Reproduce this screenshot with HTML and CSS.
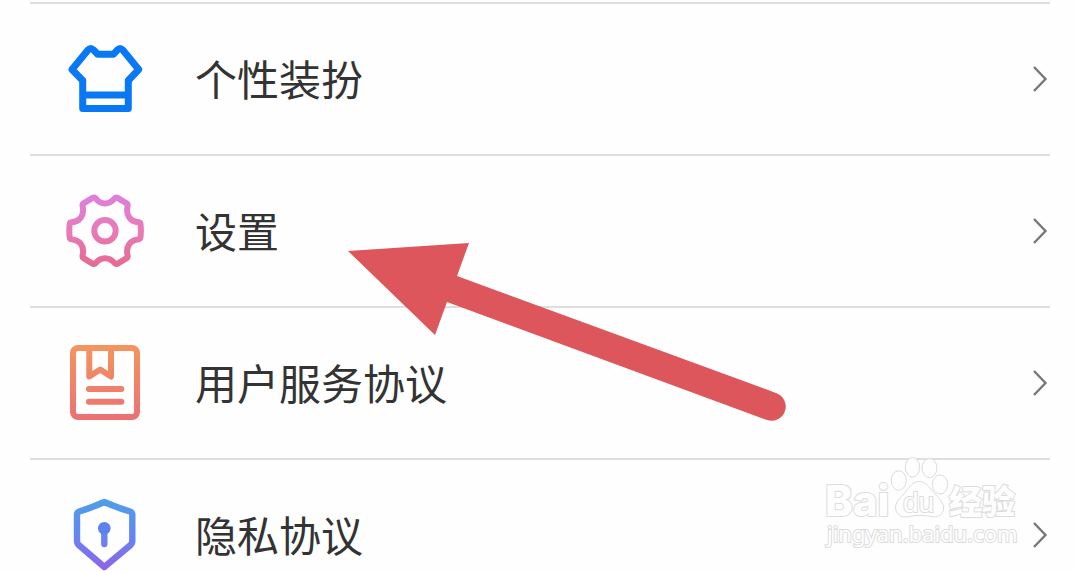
FILE: index.html
```html
<!DOCTYPE html>
<html lang="zh-CN">
<head>
<meta charset="utf-8">
<meta name="viewport" content="width=device-width, initial-scale=1">
<title>设置</title>
<link rel="stylesheet" href="styles.css">
</head>
<body>
<main class="page">
  <ul class="menu">
    <li class="menu-item">
      <a class="menu-link" href="#dress">
        <svg class="icon" viewBox="0 0 80 80" aria-hidden="true">
          <path d="M7 30.500 23.200 10.800Q25.700 8 28.300 10.800L32.700 15.300H48.300L52.500 10.800Q55 8 57.600 10.800L73.700 30.500 63.300 41.500V69.500H17.700V41.500ZM17.700 56H63.300" fill="none" stroke="#0878f4" stroke-width="7" stroke-linejoin="round"/>
        </svg>
        <span class="label">个性装扮</span>
        <svg class="chevron" viewBox="0 0 16 28" aria-hidden="true"><path d="M2 2 13.500 14 2 26"/></svg>
      </a>
    </li>
    <li class="menu-item">
      <a class="menu-link" href="#settings">
        <svg class="icon" viewBox="0 0 80 80" aria-hidden="true">
          <defs><linearGradient id="pink" gradientUnits="userSpaceOnUse" x1="40" y1="3" x2="40" y2="76"><stop offset="0" stop-color="#dc7fdd"/><stop offset=".5" stop-color="#e87bb8"/><stop offset="1" stop-color="#e56a90"/></linearGradient></defs>
          <g fill="none" stroke="url(#pink)" stroke-width="6" stroke-linejoin="round">
            <path d="M18.500 12.300 28 6.700Q29.500 6 30.800 7.500C35.500 14 44.500 14 49.500 7.500Q50.700 6 52.200 6.700L61.700 12.300Q63 13.200 62.600 15C60.500 24 65 30.500 73.800 31.300Q75.300 31.500 75.500 33Q76.300 39.700 75.500 46.500Q75.300 48 73.800 48.200C65 49 60.500 55.500 62.600 64.500Q63 66.300 61.700 67.200L52.200 72.800Q50.700 73.500 49.500 72C44.500 65.500 35.500 65.500 30.800 72Q29.500 73.500 28 72.800L18.500 67.200Q17.200 66.300 17.600 64.500C19.700 55.500 15.200 49 6.400 48.200Q4.900 48 4.700 46.500Q3.900 39.700 4.700 33Q4.900 31.500 6.400 31.300C15.200 30.500 19.700 24 17.600 15Q17.200 13.200 18.500 12.300Z"/>
            <circle cx="40" cy="39.700" r="10.700"/>
          </g>
        </svg>
        <span class="label">设置</span>
        <svg class="chevron" viewBox="0 0 16 28" aria-hidden="true"><path d="M2 2 13.500 14 2 26"/></svg>
      </a>
    </li>
    <li class="menu-item">
      <a class="menu-link" href="#terms">
        <svg class="icon" viewBox="0 0 80 80" aria-hidden="true">
          <defs><linearGradient id="orange" gradientUnits="userSpaceOnUse" x1="40" y1="2" x2="40" y2="77"><stop offset="0" stop-color="#f4955d"/><stop offset="1" stop-color="#ec7173"/></linearGradient></defs>
          <g fill="none" stroke="url(#orange)" stroke-width="6" stroke-linejoin="round" stroke-linecap="round">
            <rect x="8" y="5" width="64" height="69" rx="5"/>
            <path d="M24.300 5V33.500L35.200 26.500 46 33.500V5"/>
            <path d="M24 46H56.300M24 58.700H56.300"/>
          </g>
        </svg>
        <span class="label">用户服务协议</span>
        <svg class="chevron" viewBox="0 0 16 28" aria-hidden="true"><path d="M2 2 13.500 14 2 26"/></svg>
      </a>
    </li>
    <li class="menu-item">
      <a class="menu-link" href="#privacy">
        <svg class="icon" viewBox="0 0 80 80" aria-hidden="true">
          <defs><linearGradient id="blue" gradientUnits="userSpaceOnUse" x1="40" y1="4" x2="40" y2="76"><stop offset="0" stop-color="#4d9fe8"/><stop offset=".5" stop-color="#6685f3"/><stop offset="1" stop-color="#9162e6"/></linearGradient></defs>
          <g fill="none" stroke="url(#blue)" stroke-width="6.400" stroke-linejoin="round" stroke-linecap="round">
            <path d="M39.300 7Q53 13 65 16.500Q67.300 17.300 67.300 19.500V46Q67.300 48.500 65 50.500L39.300 72 14.300 50.500Q12 48.500 12 46V19.500Q12 17.300 14.300 16.500Q26 13 39.300 7Z"/>
            <path d="M39.300 33V49"/>
          </g>
          <circle cx="39.300" cy="33.300" r="6.300" fill="#5c83ed"/>
        </svg>
        <span class="label">隐私协议</span>
        <svg class="chevron" viewBox="0 0 16 28" aria-hidden="true"><path d="M2 2 13.500 14 2 26"/></svg>
      </a>
    </li>
  </ul>

  <svg class="pointer" viewBox="0 0 480 220" aria-hidden="true">
    <path d="M18 31 139 23 127 56 446 173A13.800 13.800 0 0 1 437 200L117 82 105 115Z" fill="#dc565b"/>
  </svg>

  <svg class="watermark" viewBox="0 0 266 127" role="img" aria-label="Baidu 经验 jingyan.baidu.com">
    <g class="mark">
      <text class="mark-brand" x="15" y="71">Bai</text>
      <path d="M109 36.500C117 36.500 119 43 126 50C132 56 134 60 133.500 64C133 70 127 73 121 71.500C113 70 106 70 99 71.500C91 73.500 86 69 85.500 63C85.500 58 88 55 93 50C99 43 102 36.500 109 36.500Z"/>
      <ellipse cx="88.700" cy="35.500" rx="7.500" ry="9.700"/>
      <ellipse cx="102.500" cy="22.300" rx="7.200" ry="9.800"/>
      <ellipse cx="119.500" cy="23" rx="7.500" ry="9.500"/>
      <ellipse cx="130" cy="39.500" rx="7.700" ry="9.500"/>
      <text class="mark-du" x="93" y="67">du</text>
      <text class="mark-cjk" x="139" y="69">经验</text>
      <text class="mark-url" x="17" y="97">jingyan.baidu.com</text>
    </g>
  </svg>
</main>
</body>
</html>
```
FILE: styles.css
```css
* {
  box-sizing: border-box;
}

body {
  margin: 0;
  background: #fefefe;
  color: #333;
  font-family: "Noto Sans CJK SC", sans-serif;
}

.page {
  position: relative;
  height: 100vh;
  overflow: hidden;
  padding: 2px 26px 0 30px;
}

.menu {
  margin: 0;
  padding: 0;
  list-style: none;
}

.menu-item {
  border-top: 2px solid #dedede;
}

.menu-link {
  display: flex;
  align-items: center;
  height: 150px;
  padding-left: 35px;
  color: inherit;
  text-decoration: none;
}

.icon {
  flex: none;
  width: 80px;
  height: 80px;
}

.label {
  flex: 1;
  padding: 0 0 2px 50px;
  font-size: 42px;
  line-height: 60px;
}

.chevron {
  flex: none;
  width: 16px;
  height: 28px;
  margin-right: 2px;
  fill: none;
  stroke: #777;
  stroke-width: 2.4;
}

.pointer {
  position: absolute;
  top: 220px;
  left: 330px;
  width: 480px;
  height: 220px;
  pointer-events: none;
}

.watermark {
  position: absolute;
  right: 0;
  bottom: 0;
  width: 266px;
  height: 127px;
  pointer-events: none;
}

.mark {
  fill: #fefefe;
  stroke: #dcdcdc;
  stroke-width: 1;
}

.mark text {
  paint-order: stroke;
  stroke-width: 2;
}

.mark-brand {
  font: 800 42px Inter, "Liberation Sans", sans-serif;
}

.mark-du {
  font: 28px "Liberation Sans", sans-serif;
}

.mark-cjk {
  font: 900 33px "Noto Sans CJK SC", sans-serif;
}

.mark-url {
  font: 22px "Noto Sans", sans-serif;
}
```
